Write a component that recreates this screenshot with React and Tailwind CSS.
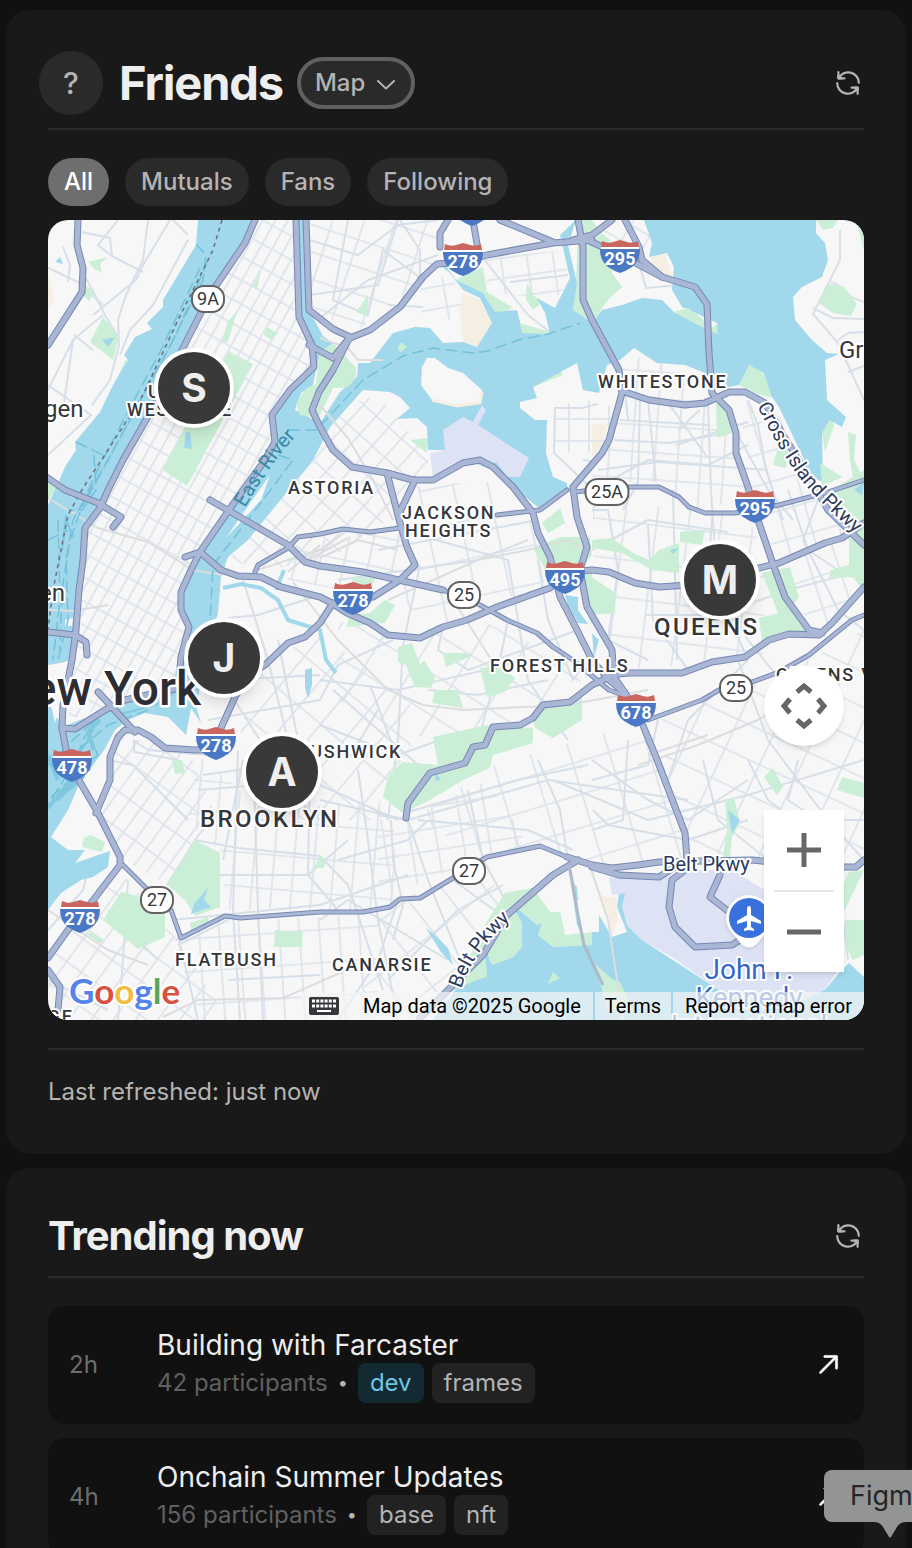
import React, { useState } from "react";
import { RxChevronDown, RxArrowTopRight } from "react-icons/rx";

// street grids, one per neighbourhood: angle and block size
const grids = [
  { id: "manhattan", angle: 29, w: 11, h: 21, area: "205,0 250,0 252,100 266,130 264,150 224,190 224,225 150,330 134,380 140,410 130,470 60,485 20,500 30,400 36,310 62,268 120,160 165,70" },
  { id: "uptown", angle: 18, w: 30, h: 26, area: "262,0 395,0 385,45 350,85 305,112 264,90" },
  { id: "bronx", angle: -10, w: 29, h: 22, area: "372,60 402,56 415,75 412,100 374,100" },
  { id: "soundview", angle: -8, w: 26, h: 20, area: "436,38 520,30 524,60 506,80 440,72" },
  { id: "throgs", angle: 30, w: 22, h: 18, area: "545,15 565,0 600,0 604,30 580,40" },
  { id: "astoria", angle: 42, w: 17, h: 25, area: "285,190 330,175 380,235 380,258 340,300 280,340 215,350 180,340 272,225" },
  { id: "sunnyside", angle: 12, w: 24, h: 30, area: "272,320 350,310 365,345 320,375 240,360 240,335" },
  { id: "jackson", angle: -12, w: 34, h: 38, area: "370,265 440,262 482,300 500,360 420,395 372,410 350,365 370,345" },
  { id: "collegept", angle: 0, w: 20, h: 22, area: "507,185 545,180 570,190 552,232 507,232" },
  { id: "whitestone", angle: 4, w: 23, h: 27, area: "575,140 605,135 660,180 682,195 700,280 640,290 610,262 540,262 565,220" },
  { id: "bayside", angle: -16, w: 27, h: 30, area: "690,180 725,185 765,260 800,320 730,340 708,290" },
  { id: "flushing", angle: 7, w: 32, h: 38, area: "545,280 700,295 720,350 715,440 570,450 545,390" },
  { id: "fresh", angle: -18, w: 28, h: 32, area: "740,340 816,310 816,370 775,410 750,390" },
  { id: "middle", angle: 32, w: 42, h: 36, area: "290,400 372,420 432,400 540,450 520,480 430,520 380,520 290,480" },
  { id: "maspeth", angle: 40, w: 28, h: 42, area: "215,450 270,410 380,500 340,560 340,600 210,600 190,500" },
  { id: "hollis", angle: 25, w: 38, h: 32, area: "610,500 760,440 816,410 816,640 640,640" },
  { id: "ozone", angle: -17, w: 38, h: 32, area: "445,545 600,500 637,610 637,640 540,645 490,625 440,635 365,600" },
  { id: "slope", angle: 36, w: 14, h: 30, area: "66,515 140,530 170,600 120,665 75,640 52,592" },
  { id: "sunset", angle: 36, w: 18, h: 28, area: "0,740 72,650 130,720 180,800 0,800" },
  { id: "crown", angle: 5, w: 20, h: 34, area: "150,535 215,590 345,580 350,690 180,690 172,630 140,600" },
  { id: "flatbush", angle: -4, w: 20, h: 33, area: "125,715 180,700 330,695 330,800 150,800" },
  { id: "newlots", angle: -9, w: 26, h: 22, area: "330,600 360,598 440,560 480,625 430,640 330,680" },
  { id: "canarsie", angle: -38, w: 34, h: 42, area: "330,700 350,680 440,650 458,695 400,770 372,800 310,800" },
];

const water = [
  // Hudson and the upper bay
  "M150 0 148 25 115 80 115 87 99 103 104 109 87 117 76 135 80 140 66 163 52 192 27 222 28 230 17 247 8 268 0 285 0 445 12 443 24 440 30 390 34 340 34 312 52 285 60 265 98 200 118 165 135 128 163 73 197 23 207 0Z",
  "M0 482 12 503 17 506 57 490 77 480 130 468 130 476 145 476 153 503 143 488 138 515 120 497 97 493 80 500 67 510 56 530 43 548 33 560 20 590 3 617 20 630 37 630 27 643 62 631 60 647 45 657 33 660 13 673 0 690Z",
  // East River and the Sound
  "M248 0 256 0 258 85 275 116 285 123 272 132 265 165 253 173 247 190 272 203 292 172 309 157 310 143 322 143 345 113 367 107 382 108 395 123 415 122 429 127 444 103 432 78 415 70 402 53 392 45 397 45 408 60 435 73 447 92 469 90 474 110 502 113 497 93 489 78 507 88 522 58 512 15 528 0 520 25 529 63 525 90 544 103 554 90 574 85 594 78 614 80 627 93 644 97 669 113 669 103 634 87 624 70 626 47 619 33 601 37 604 23 596 0 768 0 768 13 777 23 780 40 774 57 754 67 745 77 747 100 764 120 779 133 791 134 777 140 779 180 798 197 794 207 782 200 774 213 775 262 765 258 731 187 724 177 716 153 701 145 691 165 666 170 657 153 637 145 609 143 586 128 572 140 559 145 551 173 535 170 529 143 485 167 489 178 472 182 472 188 487 200 499 200 498 233 505 257 519 263 519 272 492 289 469 270 459 257 397 230 380 230 379 207 369 198 349 199 362 188 352 177 342 172 315 170 282 207 265 240 200 320 180 337 173 357 170 393 165 410 150 477 130 476 133 437 142 407 133 387 133 370 143 347 190 277 224 225 224 195 242 170 266 147 262 118 250 97Z",
  // Jamaica Bay
  "M462 683 475 693 489 705 494 703 490 715 505 727 544 725 544 712 551 712 551 695 564 717 579 712 569 687 571 673 586 662 607 665 607 669 587 667 579 680 579 705 594 720 671 770 777 770 791 753 801 743 816 757 816 800 385 800 405 773 437 727 444 745 465 737 474 727 474 703Z",
  "M523 662 529 667 530 700 537 720 529 705Z",
  "M517 375 530 377 530 390 540 404 530 403 520 385Z M544 413 551 420 546 437Z",
  "M257 450 264 448 264 465 260 478 257 468Z",
  "M54 120 67 117 60 127Z M138 212 142 213 144 229 136 228Z M7 42 12 37 15 44Z M146 684 160 668 156 680 163 687 143 694Z",
  "M680 590 692 600 684 614Z M622 330 631 328 625 334Z M387 552 393 560 388 561Z M806 270 816 262 814 275Z",
  "M378 708 390 718 400 728 405 745 393 732Z",
];

const parks = [
  "180,131 205,144 145,255 139,266 115,250 137,208",
  "55,97 71,117 65,140 42,122",
  "40,42 60,37 52,44 54,53 47,49",
  "37,65 47,72 41,81 35,75",
  "189,91 180,122 174,122 180,101",
  "213,50 209,69 205,66",
  "218,107 230,113 223,120 216,115",
  "185,25 190,24 180,42 178,35",
  "78,139 82,147 76,160 71,154",
  "0,262 10,268 0,280",
  "272,130 285,123 308,148 308,158 300,167 285,168 272,195 264,200 268,165",
  "248,184 258,168 268,165 266,195 252,195",
  "320,75 320,97 308,92",
  "435,47 439,72 464,87 458,92 447,92 435,74 407,60",
  "479,63 486,76 495,82 485,90 478,80",
  "544,0 530,0 528,68 525,90 542,108 554,88 562,78 574,67 564,53 562,20 552,12",
  "485,167 488,155 510,148 515,155 490,165",
  "362,220 380,218 379,233",
  "771,83 780,64 795,66 809,84 803,96 785,93",
  "668,183 681,190 684,213 669,218",
  "691,165 696,148 703,145 718,155 726,178 712,175",
  "772,243 794,257 774,267",
  "768,0 775,10 785,8 790,0",
  "808,0 816,0 816,30",
  "774,213 784,198 786,205 777,232",
  "800,212 808,215 806,240 816,260 806,265 802,240",
  "729,230 740,228 738,248 725,245",
  "485,328 512,317 542,317 544,335 532,350 502,357",
  "494,303 512,288 517,303 500,313",
  "532,350 544,350 544,405 536,385",
  "305,357 328,358 322,368 303,370",
  "322,393 337,380 347,385 337,403 299,407 301,395",
  "350,427 364,423 372,445 376,440 387,458 383,468 367,467 358,445 350,442",
  "395,433 419,433 424,436 398,447",
  "432,448 452,446 467,458 457,472 439,477",
  "387,470 410,470 415,488 384,483",
  "485,500 495,487 534,478 534,500 505,518 487,508",
  "385,517 439,505 485,508 485,523 445,535 442,548 415,560 382,580 355,593 335,577 340,557 354,542 390,545",
  "0,540 15,535 32,560 22,568 0,575",
  "544,320 564,318 585,333 601,340 611,330 631,323 631,353 604,350 574,333 544,328",
  "632,312 657,310 654,325 632,322",
  "544,357 567,373 567,393 544,395",
  "714,353 742,347 751,377 745,385 760,412 714,422 711,398 730,393",
  "784,270 816,250 816,370 804,357 781,358 783,350 801,345 801,320 790,295",
  "147,620 172,633 172,687 147,696 137,680 119,665",
  "73,672 117,683 117,717 90,729 55,700",
  "227,710 255,712 254,727 226,727",
  "36,618 42,615 57,622 54,632 34,627",
  "124,540 134,540 137,553 127,554",
  "142,703 160,697 161,703 143,712",
  "43,711 56,720 52,723 40,715",
  "272,635 278,640 276,648 266,648",
  "457,673 485,668 502,692 512,692 517,715 544,712 544,725 505,727 490,715 494,703 489,705 475,693 462,683 474,703 474,727 465,737 444,745 437,727 439,757 429,760 405,770 420,740 437,705",
  "500,764 505,752 512,758",
  "716,557 725,548 735,567 729,575",
  "677,580 686,577 692,603 684,617 682,637 675,637 679,610",
  "794,557 816,563 816,578 789,570",
  "800,652 816,650 797,690 787,690",
  "797,700 816,700 816,735 805,740 797,725",
  "546,743 565,760 572,762 585,790 560,790",
];

const airports = [
  "395,210 415,197 425,202 434,185 438,190 430,205 481,238 472,257 459,257 449,243 429,240 385,258 382,233 397,230",
  "561,657 617,657 637,650 684,650 717,670 796,700 796,740 777,770 757,780 671,770 624,737 594,720 579,705 574,687 577,673 587,668 607,669 564,675",
];

// islands and piers
const land = [
  "374,147 379,138 387,138 400,148 415,153 434,170 432,183 409,187 384,180 373,165",
  "178,318 207,276 222,255 213,280 190,305",
  "8,445 17,448 14,480 7,503 2,480",
  "350,128 353,123 359,127 352,132",
  "17,400 25,398 24,406 17,406",
];

// parks that sit on the water's edge
const shoreParks = [
  "248,184 258,168 272,163 268,198 252,195",
  "272,130 285,125 308,148 308,158 300,167 285,168 270,195 264,180 268,165",
  "350,128 353,123 359,127 352,132",
  "457,673 485,668 502,692 512,692 517,715 505,720 490,715 494,703 489,705 475,693 462,683 474,703 474,727 465,737 444,745 437,727 439,757 429,760 405,770 420,740 437,705",
  "472,103 502,112 500,114 474,113",
  "625,92 640,88 665,107 670,103 669,114 650,105",
  "500,764 505,752 512,758",
  "546,743 565,760 572,762 585,790 560,790",
  "772,243 794,257 774,264",
];

const sand = [
  "415,73 432,80 444,103 429,127 415,125 412,92",
  "602,37 617,33 625,58 610,52",
  "544,205 560,203 554,225 544,238",
  "551,676 568,677 570,700 564,717",
  "0,55 6,80 0,90",
];

const rails = [
  "M0 278 50 308 100 322 145 350 175 355", "M0 390 25 391 60 385", "M210 350 240 340 272 330 300 310", "M272 338 310 320 350 330", "M240 352 272 325 260 340 300 318",
  "M245 362 290 420 310 440 340 470 375 485 415 490 520 485 600 470", "M330 490 300 540", "M272 185 300 218 325 260 345 300", "M335 140 310 140 300 128 272 118",
  "M540 640 560 700 575 800", "M590 545 650 525 710 500 760 470", "M600 535 660 515", "M540 330 520 320 480 330 430 340 340 380", "M343 600 345 640 355 685 345 720", "M100 745 60 730 0 690", "M115 797 150 780 235 778 310 745",
];

const streets = [
  "M34 12 62 18 64 36 95 52", "M70 0 50 25 64 36", "M100 0 95 40 78 75 70 100 71 125 62 160 44 185", "M140 20 105 85 82 110 72 135", "M35 52 57 95 70 117", "M0 48 30 62 55 85",
  "M125 0 140 15", "M0 165 43 195 0 235", "M26 115 45 130", "M0 170 25 120 55 95", "M25 120 15 190", "M15 27 22 45 20 62",
  "M45 95 88 60 95 45 122 0", "M300 0 285 80 320 95 335 30 375 60", "M262 20 310 35 350 5 390 0", "M262 75 330 65 350 0", "M272 98 320 60 390 35",
  "M352 0 372 30 372 60", "M340 85 375 87", "M435 38 480 95 502 112", "M462 62 520 55", "M535 240 550 242", "M506 188 534 188 550 184", "M507 187 506 233 545 270",
  "M590 40 598 68 630 65", "M792 10 792 40 765 94 790 123 800 145 816 180", "M765 88 785 98 816 99", "M783 62 790 65 805 78 816 82", "M790 120 800 113 816 112", "M800 152 816 146",
  "M572 200 660 205", "M566 220 620 223 680 213", "M550 250 610 242 720 250", "M577 172 580 200", "M592 180 590 262 575 290", "M600 180 608 262", "M618 180 660 238", "M660 183 663 270 668 345", "M630 210 652 190",
  "M544 270 600 240 660 245 700 225", "M700 180 710 205 718 250 735 300", "M690 215 720 270 745 300", "M628 225 700 202", "M544 330 600 300 680 312",
  "M544 290 560 290 570 350 560 420 600 440", "M600 305 605 400 640 450", "M625 270 629 440", "M665 290 660 350 700 420 740 470", "M598 395 670 395 740 370 816 350",
  "M690 440 720 520 780 600 816 640", "M680 395 700 440", "M770 280 755 320 790 390 816 410", "M740 270 760 330 790 350",
  "M352 310 460 340 480 460 520 520", "M372 345 355 425 350 520 340 600", "M405 380 450 450 430 520", "M330 330 490 300", "M290 360 430 340 480 320", "M490 340 500 400 525 460 540 440",
  "M345 420 290 445 272 480", "M395 407 390 430 420 450 530 410", "M272 460 350 470 480 440", "M380 470 430 475 500 460", "M322 465 350 540", "M285 470 370 545", "M272 505 350 535 420 510", "M460 400 450 450",
  "M180 398 210 395 272 375", "M195 360 220 440 240 520", "M180 460 272 455", "M180 470 250 580 272 600", "M230 420 250 520", "M160 500 272 480", "M85 520 100 530 160 535", "M86 520 86 532 130 540",
  "M150 570 272 560", "M155 555 190 550 272 540", "M147 620 190 628 272 636", "M172 655 260 655 300 620", "M175 640 195 540", "M205 530 210 690 215 800", "M190 530 185 690 192 800", "M260 655 262 540", "M260 655 290 690",
  "M125 700 272 685 360 655", "M130 725 180 700", "M119 665 147 620 170 590", "M140 600 85 545 60 540", "M272 636 300 665 335 770", "M330 595 360 600 500 560 640 580", "M272 580 360 600 380 660 420 760",
  "M360 592 470 560 540 545", "M370 600 480 610 525 630", "M420 570 435 640 460 685", "M490 540 512 590 520 640 530 680", "M505 560 600 600 700 575 816 540", "M272 565 350 600", "M310 550 320 620 330 700 350 800",
  "M340 760 410 690 455 665", "M405 660 460 700", "M272 700 300 680 400 740", "M290 640 360 620 380 600", "M290 800 330 740 350 680",
  "M610 500 600 545 544 560", "M620 560 640 500 700 440", "M580 520 575 600 544 610", "M655 540 670 600 720 640", "M700 540 720 580 760 610", "M544 540 600 580 640 600 700 560", "M750 540 740 580 770 600 816 600",
  "M780 650 795 700 800 740", "M0 640 40 650 35 670 0 710", "M0 760 60 790", "M80 660 75 740 70 800", "M110 740 60 690", "M130 715 150 800", "M180 760 272 755", "M545 590 560 605 640 620 700 600",
];

const highways = [
  "M30 0 29 25 35 48 34 72 0 125",
  "M207 0 197 23 163 73 135 128 118 165 98 200 75 240 60 270 52 288 37 308 35 340 31 370 28 410 24 440 15 485 14 508 20 540 32 562 50 593 72 637 72 645 43 683 20 710 0 738",
  "M248 0 251 97 264 125 266 147 242 170 224 195 227 222 215 243 190 277 152 332 143 350 133 372 133 390 141 407 133 437 130 468 77 480 57 490 27 509 14 508",
  "M258 0 261 90 285 109 302 117",
  "M302 118 322 110 352 87 375 57 389 44 415 42 439 35 505 23 544 20",
  "M535 18 574 36 614 57 647 67 659 84 661 133 664 173 681 190 688 213 688 233 700 267 711 303 726 347 737 377 761 410 774 413",
  "M261 125 285 138 302 117 285 150 271 172 264 190 272 207 285 230 304 247 339 253 365 260 385 260 415 243 432 240 445 247 465 267 485 293 490 313 502 337 512 377 529 410 544 440 561 460 577 473",
  "M530 0 535 27 535 80 544 100 571 150 574 173 561 220 554 233 525 267 526 275 529 297 539 327 532 350 539 387 564 430 566 457 577 473 594 503 608 537 637 613 639 640",
  "M577 0 591 27 594 40 614 57",
  "M452 0 505 22",
  "M525 20 544 15 564 0",
  "M425 0 430 30",
  "M400 0 392 13 392 27",
  "M577 172 601 180 637 185 657 183 681 172 697 172 717 183 735 215 760 255 780 290 816 325",
  "M137 337 152 332 173 350 190 356 213 357 233 367 272 377 282 382 299 393 322 403 340 415 372 418 395 407 419 400 449 387 502 368 520 352 544 350 561 352 587 363 611 367 641 365 711 348 731 343 777 323 794 318 816 303",
  "M339 253 352 303 359 327 367 345 352 360 325 377 285 383 272 403 257 417 240 423 217 445 200 455 187 477 173 508 165 530 147 530 117 528 103 517 90 510 77 510 70 517 62 537 62 560 48 593",
  "M367 260 352 292",
  "M358 598 360 583 382 553 417 543 425 527 437 525 445 507 472 505 485 498 495 485 522 482 544 465 561 457",
  "M561 455 581 453 634 453 664 442 697 437 721 420 741 414 771 415 784 403 816 367",
  "M530 640 505 655 459 695 435 735 400 770 372 798",
  "M0 258 17 270 50 283 73 297 65 307",
  "M0 412 27 415 38 422 39 435",
  "M50 472 87 512",
  "M519 637 544 645 564 648 590 645 611 642 704 640 768 647 808 647 816 640",
  "M544 647 571 655 611 657 627 647",
  "M637 650 624 660 621 687 627 707 647 727 684 725 692 720",
  "M672 655 662 677 680 691",
  "M0 750 12 767 10 790",
  "M162 280 183 292 240 325 257 342 272 346 315 352 395 370",
];

// thinner state roads
const roads = [
  "M75 645 97 667 123 690 133 718 143 713 177 696 193 698 272 692 315 692 342 687 352 679 372 678 405 658 439 637 492 626 519 637",
  "M519 270 492 290 449 295", "M352 308 322 312 295 309 272 314 250 317 240 328 210 345 207 352",
  "M395 370 432 385 459 400 489 413 505 427 525 440 561 470 581 477",
  "M600 500 654 480 671 470 704 462 731 452 761 435 804 400 816 395",
  "M525 272 582 267 611 267 631 277 641 287 657 293 687 293 731 285 777 273 816 260",
];

const areas = [
  { name: "ASTORIA", x: 240, y: 274 },
  { name: "JACKSON", x: 354, y: 299 },
  { name: "HEIGHTS", x: 357, y: 317 },
  { name: "WHITESTONE", x: 550, y: 168 },
  { name: "FOREST HILLS", x: 442, y: 452 },
  { name: "QUEENS VILLAGE", x: 728, y: 461 },
  { name: "BUSHWICK", x: 249, y: 538 },
  { name: "FLATBUSH", x: 127, y: 746 },
  { name: "CANARSIE", x: 284, y: 751 },
  { name: "UPPER", x: 100, y: 178 },
  { name: "WEST SIDE", x: 79, y: 196 },
  { name: "RIDGE", x: -34, y: 803 },
];

const interstates = [
  { n: "278", x: 415, y: 42 },
  { n: "", x: 424, y: -8 },
  { n: "295", x: 572, y: 39 },
  { n: "278", x: 305, y: 381 },
  { n: "495", x: 517, y: 360 },
  { n: "295", x: 707, y: 289 },
  { n: "678", x: 588, y: 493 },
  { n: "278", x: 168, y: 526 },
  { n: "478", x: 24, y: 548 },
  { n: "278", x: 32, y: 699 },
];

const stateRoutes = [
  { n: "9A", x: 160, y: 79, w: 32 },
  { n: "25A", x: 559, y: 272, w: 43 },
  { n: "25", x: 416, y: 375, w: 32 },
  { n: "25", x: 688, y: 468, w: 32 },
  { n: "27", x: 109, y: 680, w: 32 },
  { n: "27", x: 421, y: 651, w: 32 },
];

const friends = [
  { letter: "S", place: "left-[calc(50%-302px)] top-[128px]" },
  { letter: "M", place: "left-[calc(50%+224px)] top-[320px]" },
  { letter: "J", place: "left-[calc(50%-272px)] top-[398px]" },
  { letter: "A", place: "left-[calc(50%-214px)] top-[512px]" },
];

const filters = ["All", "Mutuals", "Fans", "Following"];

const trends = [
  { time: "2h", title: "Building with Farcaster", count: 42, tags: ["dev", "frames"] },
  { time: "4h", title: "Onchain Summer Updates", count: 156, tags: ["base", "nft"] },
];

function RefreshIcon() {
  return (
    <svg viewBox="-4 -4 32 32" className="size-8" fill="none" stroke="currentColor" strokeWidth="2.2" strokeLinejoin="round" strokeLinecap="round">
      <path d="M2.4 1.2V7.3H8.5M2.8 7A10.6 10.6 0 0 1 22.8 11.8" />
      <path d="M21.6 22.8V16.7H15.5M21.2 17A10.6 10.6 0 0 1 1.2 12.2" />
      <path d="M2.4 4.6V7.3H5.6ZM21.6 19.4V16.7H18.4Z" fill="currentColor" />
    </svg>
  );
}

function CityMap() {
  const halo = "stroke-white [paint-order:stroke] [stroke-linejoin:round]";
  return (
    <svg viewBox="0 0 816 800" preserveAspectRatio="xMidYMid slice" className="block h-full w-full font-[Roboto,sans-serif]" aria-label="Map of New York">
      <defs>
        {grids.map((g) => (
          <pattern key={g.id} id={g.id} width={g.w} height={g.h} patternUnits="userSpaceOnUse" patternTransform={`rotate(${g.angle})`}>
            <path d={`M1 0V${g.h}M0 1H${g.w}`} stroke="#dbe2ea" strokeWidth="1.6" />
          </pattern>
        ))}
        <path id="crossIsland" d="M709 186C724 216 736 236 748 253S776 286 812 318" />
        <path id="beltSouth" d="M413 769C422 742 436 722 466 696" />
        <path id="eastRiver" d="M197 288C212 262 226 240 250 214" />
      </defs>
      <rect width="816" height="800" fill="#f7f7f7" />
      {sand.map((p) => <polygon key={p} points={p} fill="#f5efe3" />)}
      {grids.map((g) => <polygon key={g.id} points={g.area} fill={`url(#${g.id})`} />)}
      <g fill="none" stroke="#d7dfe8" strokeWidth="2" strokeLinejoin="round">
        {streets.map((d) => <path key={d} d={d} />)}
      </g>
      {parks.map((p) => <polygon key={p} points={p} fill="#cbeed6" />)}
      {water.map((d) => <path key={d} d={d} fill="#a1d8eb" />)}
      {airports.map((p) => <polygon key={p} points={p} fill="#dde2f5" />)}
      {land.map((p) => <polygon key={p} points={p} fill="#f7f7f7" />)}
      {shoreParks.map((p) => <polygon key={p} points={p} fill="#cbeed6" />)}
      <path d="M384 180 409 186 432 183 434 172" fill="none" stroke="#f5efe3" strokeWidth="3" />
      <path d="M175 368 193 364 213 368 230 380 240 400 272 410 278 440 288 453M228 370 236 350" fill="none" stroke="#a1d8eb" strokeWidth="4" />
      <g fill="none" stroke="#dcdddf" strokeWidth="2">
        {rails.map((d) => <path key={d} d={d} />)}
      </g>
      {/* ferry lines */}
      <g fill="none" stroke="#74c1dc" strokeWidth="1.5" strokeDasharray="12 5">
        <path d="M272 206 315 160 355 136 385 128 425 133 440 131 470 120 500 114 532 103" />
        <path d="M148 24 158 35 155 60 120 130 95 175 60 240 42 270 25 300 18 340 20 400 10 440" />
        <path d="M160 40 128 115 70 222 48 262 35 285" />
        <path d="M152 48 112 132 78 195 52 245 38 275 22 320 14 370 12 430" />
        <path d="M28 222 55 235M46 235 48 270 34 290 20 290" />
        <path d="M240 210 272 210M230 235 245 240 200 300 165 345 162 400 158 430" />
        <path d="M100 490 60 505 30 530 10 550M50 495 35 520 22 560 0 580M70 480 25 520 0 545M10 300 12 380 5 440M0 320 20 310" />
        <path d="M45 510 28 540 0 585M40 515 50 535 20 560" />
      </g>
      <g fill="none" stroke="#7fc8e0" strokeWidth="4" strokeLinejoin="round">
        <path d="M42 548 18 566 0 588M36 556 8 580M52 500 40 512 46 530M0 535 10 560" />
        <path d="M18 295 14 330 18 300 26 318M130 470 110 484 70 495" strokeWidth="2" />
      </g>
      <path d="M174 0 165 30 130 100 95 175 60 230 35 268 20 295 12 335 5 370 0 410" fill="none" stroke="#6b6f78" strokeWidth="1.5" strokeDasharray="4 4" />
      <g fill="none" stroke="#7687b4" strokeLinejoin="round" strokeLinecap="round">
        {highways.map((d) => <path key={d} d={d} strokeWidth="7" />)}
        {roads.map((d) => <path key={d} d={d} strokeWidth="5" />)}
      </g>
      <g fill="none" stroke="#a9b7d5" strokeLinejoin="round" strokeLinecap="round">
        {highways.map((d) => <path key={d} d={d} strokeWidth="5" />)}
        {roads.map((d) => <path key={d} d={d} strokeWidth="3" />)}
      </g>
      <path d="M521 645 529 690 536 725 555 765" fill="none" stroke="#aeb9c9" strokeWidth="3" />

      {areas.map((a) => (
        <text key={a.name} x={a.x} y={a.y} strokeWidth="4" className={`fill-[#35373b] text-[18px] font-medium tracking-widest ${halo}`}>{a.name}</text>
      ))}
      <g strokeWidth="4" className={`fill-[#35373b] text-[24px] font-medium tracking-widest ${halo}`}>
        <text x="606" y="415">QUEENS</text>
        <text x="152" y="607">BROOKLYN</text>
      </g>
      <g strokeWidth="4" className={`fill-[#35373b] text-[24px] ${halo}`}>
        <text x="-4" y="197">gen</text>
        <text x="-9" y="381">en</text>
        <text x="791" y="138">Gr</text>
      </g>
      <text x="153" y="485" textAnchor="end" strokeWidth="5" className={`fill-[#2c2e33] text-[48px] font-medium ${halo}`}>New York</text>
      <g strokeWidth="4" className={`fill-[#2d3a5e] text-[20px] ${halo}`}>
        <text x="615" y="651">Belt Pkwy</text>
        <text><textPath href="#crossIsland">Cross Island Pkwy</textPath></text>
        <text><textPath href="#beltSouth">Belt Pkwy</textPath></text>
      </g>
      <text className="fill-[#3a8aa5] text-[20px]"><textPath href="#eastRiver">East River</textPath></text>

      {interstates.map((s) => (
        <g key={s.n + s.x} transform={`translate(${s.x} ${s.y})`}>
          <path d="M-18-18Q-12-15-7-17L0-19 7-17Q12-15 18-18L19-12H-19Z" fill="#cb6560" />
          <path d="M-19-12H19V-10H-19Z" fill="#fff" />
          <path d="M-20-10H20Q20 2 12 8 6 12 0 14-6 12-12 8-20 2-20-10Z" fill="#4a78c4" />
          <text y="6" textAnchor="middle" className="fill-white text-[18px] font-bold">{s.n}</text>
        </g>
      ))}
      {stateRoutes.map((s) => (
        <g key={s.n + s.x} transform={`translate(${s.x} ${s.y})`}>
          <rect x={-s.w / 2} y="-13" width={s.w} height="26" rx="12" fill="#fff" stroke="#636363" strokeWidth="2" />
          <text y="6" textAnchor="middle" className="fill-[#35373b] text-[18px]">{s.n}</text>
        </g>
      ))}

      <path d="M701 675a23 23 0 0 1 23 23c0 12-9 17-15 26q-8 7-16 0c-6-9-15-14-15-26a23 23 0 0 1 23-23Z" fill="#fff" className="drop-shadow" />
      <circle cx="701" cy="698" r="20" fill="#3a72dd" />
      <path d="M701 686q2 0 2 3v6l10 6v3l-10-3v6l3 2v2l-5-1-5 1v-2l3-2v-6l-10 3v-3l10-6v-6q0-3 2-3Z" fill="#fff" />
      <g textAnchor="middle" strokeWidth="4" className={`fill-[#3567c9] text-[28px] ${halo}`}>
        <text x="701" y="759">John F.</text>
        <text x="701" y="787">Kennedy</text>
        <text x="701" y="815">International</text>
      </g>
      <text x="21" y="784" strokeWidth="4" className={`font-[Lato,sans-serif] text-[35px] font-bold ${halo}`}>
        <tspan fill="#5383ec">G</tspan>
        <tspan fill="#d8503f">o</tspan>
        <tspan fill="#f0bd42">o</tspan>
        <tspan fill="#5383ec">g</tspan>
        <tspan fill="#58a55c">l</tspan>
        <tspan fill="#d8503f">e</tspan>
      </text>
    </svg>
  );
}

function MapControls() {
  return (
    <div className="absolute right-5 bottom-12 flex flex-col gap-16">
      <button aria-label="Map camera controls" className="flex size-20 items-center justify-center rounded-full bg-white shadow-md">
        <svg viewBox="0 0 48 48" className="size-12" fill="none" stroke="#666" strokeWidth="5">
          <path d="M17 10 24 4 31 10M17 38 24 44 31 38M10 17 4 24 10 31M38 17 44 24 38 31" />
        </svg>
      </button>
      <div className="flex w-20 flex-col items-center bg-white shadow-md">
        <button aria-label="Zoom in" className="flex size-20 items-center justify-center">
          <svg viewBox="0 0 34 34" className="size-[34px]" stroke="#666" strokeWidth="5"><path d="M0 17H34M17 0V34" /></svg>
        </button>
        <div className="h-0.5 w-15 bg-[#e6e6e6]" />
        <button aria-label="Zoom out" className="flex size-20 items-center justify-center">
          <svg viewBox="0 0 34 34" className="size-[34px]" stroke="#666" strokeWidth="5"><path d="M0 17H34" /></svg>
        </button>
      </div>
    </div>
  );
}

function Attribution() {
  return (
    <div className="absolute right-0 bottom-0 flex h-7 items-center gap-0.5 font-[Roboto,sans-serif] text-[20px] leading-7 text-black">
      <button aria-label="Keyboard shortcuts" className="flex h-7 items-center bg-[#f5f5f5]/70 px-2">
        <svg viewBox="0 0 30 20" className="h-5 w-[30px]">
          <rect y="1" width="30" height="18" rx="2" fill="#35373b" />
          <path d="M3 5H27M3 10H27" stroke="#fff" strokeWidth="3" strokeDasharray="3 1.2" />
          <path d="M8 15H22" stroke="#fff" strokeWidth="2" />
        </svg>
      </button>
      <span className="-ml-0.5 bg-[#f5f5f5]/70 pr-3 pl-4">Map data ©2025 Google</span>
      <a href="#terms" className="bg-[#f5f5f5]/70 px-2.5">Terms</a>
      <a href="#report" className="bg-[#f5f5f5]/70 px-3">Report a map error</a>
    </div>
  );
}

function Trend({ trend }) {
  return (
    <li className="flex h-[118px] items-center rounded-2xl bg-[#111111] pr-5 pl-[21px]">
      <span className="w-[88px] text-2xl text-[#6e6e6e]">{trend.time}</span>
      <div className="flex flex-1 flex-col">
        <h3 className="text-[28px] leading-9 text-[#eeeeee]">{trend.title}</h3>
        <div className="flex items-center gap-2 text-2xl leading-10">
          <span className="text-[#606060]">{trend.count} participants</span>
          <span className="px-0.5 text-lg text-[#b4b4b4]">•</span>
          {trend.tags.map((tag) => (
            <span key={tag} className={tag === "dev" ? "rounded-lg bg-[#132a33] px-3 text-[#6cc7e2]" : "rounded-lg bg-[#222222] px-3 text-[#b4b4b4]"}>
              {tag}
            </span>
          ))}
        </div>
      </div>
      <a href="#topic" aria-label={trend.title} className="text-white">
        <RxArrowTopRight className="size-8 stroke-white stroke-[0.3]" />
      </a>
    </li>
  );
}

function App() {
  const [filter, setFilter] = useState("All");

  return (
    <main className="relative flex h-screen flex-col gap-3.5 overflow-hidden bg-[#111111] px-1.5 pt-2.5 font-[Inter,sans-serif] text-[#eeeeee]">
      <section className="shrink-0 rounded-3xl bg-[#191919] px-[42px] pt-[41px] pb-11">
        <header className="flex items-center border-b-2 border-[#2a2a2a] pb-[13px]">
          <button className="-ml-[9px] size-16 rounded-full bg-[#2a2a2a] text-[30px] font-medium text-[#b4b4b4]">?</button>
          <h1 className="ml-4 text-[47px] leading-16 font-bold tracking-tight">Friends</h1>
          <label className="ml-3.5 flex h-[52px] items-center gap-1 rounded-full border-4 border-[#606060] bg-[#2a2a2a] pr-2.5 pl-3.5 text-[#b4b4b4]">
            <select aria-label="View" className="w-[52px] appearance-none bg-transparent text-2xl font-medium outline-none">
              <option>Map</option>
              <option>List</option>
            </select>
            <RxChevronDown className="size-[30px]" />
          </label>
          <button aria-label="Refresh friends" className="ml-auto text-[#b4b4b4]">
            <RefreshIcon />
          </button>
        </header>

        <div className="mt-7 flex gap-4">
          {filters.map((name) => (
            <button
              key={name}
              onClick={() => setFilter(name)}
              className={name === filter ? "h-12 rounded-full bg-[#6e6e6e] px-4 text-2xl font-medium text-white" : "h-12 rounded-full bg-[#2a2a2a] px-4 text-2xl font-medium text-[#b4b4b4]"}
            >
              {name}
            </button>
          ))}
        </div>

        <div className="relative mt-3.5 h-[800px] overflow-hidden rounded-[20px]">
          <CityMap />
          {friends.map((f) => (
            <button key={f.letter} className={`absolute size-20 rounded-full border-4 border-white bg-[#393939] text-[39px] font-bold text-[#eeeeee] shadow-lg ${f.place}`}>
              {f.letter}
            </button>
          ))}
          <MapControls />
          <Attribution />
        </div>

        <p className="mt-7 border-t-2 border-[#2a2a2a] pt-6 text-2xl leading-9 text-[#b4b4b4]">Last refreshed: just now</p>
      </section>

      <section className="shrink-0 rounded-3xl bg-[#191919] px-[42px] pt-11 pb-11">
        <header className="flex items-center justify-between border-b-2 border-[#2a2a2a] pb-4">
          <h2 className="text-[40px] leading-12 font-bold tracking-tight">Trending now</h2>
          <button aria-label="Refresh trending" className="text-[#b4b4b4]">
            <RefreshIcon />
          </button>
        </header>
        <ul className="mt-7 flex flex-col gap-3.5">
          {trends.map((t) => (
            <Trend key={t.title} trend={t} />
          ))}
        </ul>
      </section>

      <div role="tooltip" className="absolute -right-11 bottom-[26px] w-[132px] rounded-lg bg-[#939594] pl-[26px] text-[27px] leading-[52px] text-[#262626]">
        Figma
        <svg viewBox="0 0 32 16" className="absolute top-full left-[50px] h-4 w-8">
          <path d="M0 0H32Q26 0 23 5L17 15Q16 16 15 15L9 5Q6 0 0 0Z" fill="#939594" />
        </svg>
      </div>
    </main>
  );
}

export default App;
